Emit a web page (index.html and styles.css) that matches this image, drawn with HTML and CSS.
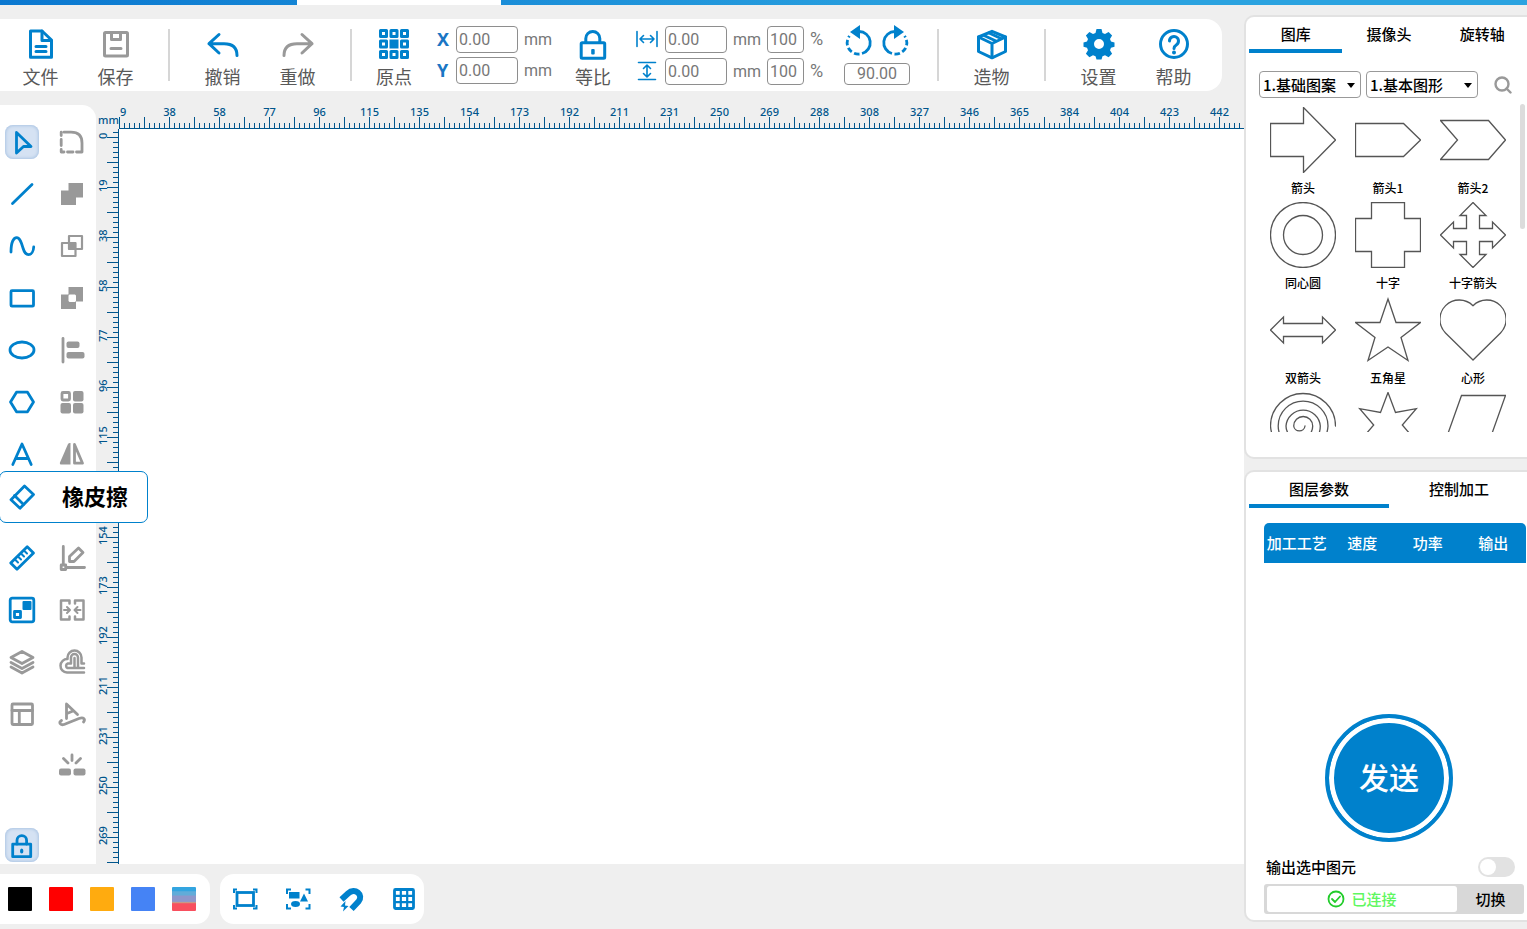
FILE: index.html
```html
<!DOCTYPE html>
<html lang="zh-CN">
  <head>
    <meta charset="UTF-8" />
    <meta name="viewport" content="width=device-width, initial-scale=1.0" />
    <title>激光雕刻</title>
    <link rel="stylesheet" href="styles.css">
  </head>
  <body>
    <div class="titlebar"><div class="titlebar-tab"></div></div>
    <div class="app">
      <main class="editor">
        <header class="toolbar">
          <button class="tool">
            <svg class="icon" viewBox="0 0 34 34"><path d="M6.5 4H18L27.500 13V30.200H6.500Z" /><path d="M18 4V13.500H27" /><path d="M12 19.500H22M12 24.500H22" /></svg>
            文件
          </button>
          <button class="tool muted">
            <svg class="icon" viewBox="0 0 34 34"><rect x="5.500" y="5.500" width="23" height="23.500" rx="1" /><path d="M12.500 6V12.500H21.500V6M12 21.500H22" /></svg>
            保存
          </button>
          <span class="sep"></span>
          <button class="tool">
            <svg class="icon" viewBox="0 0 34 34"><path d="M13 7.500L3 16.700L13 26M3 16.700H18C27 16.700 31 21 31 28.500" /></svg>
            撤销
          </button>
          <button class="tool muted">
            <svg class="icon" viewBox="0 0 34 34"><path d="M21 7.500L31 16.700L21 26M31 16.700H16C7 16.700 3 21 3 28.500" /></svg>
            重做
          </button>
          <span class="sep"></span>
          <button class="tool narrow">
            <svg class="icon" viewBox="0 0 34 34"><path d="M3.500 3.500h6v6h-6zM14 3.500h6v6h-6zM24.500 3.500h6v6h-6zM3.500 14h6v6h-6zM24.500 14h6v6h-6zM3.500 24.500h6v6h-6zM14 24.500h6v6h-6zM24.500 24.500h6v6h-6z" /><path class="solid" d="M12.500 12.500h9v9h-9z" /></svg>
            原点
          </button>
          <div class="fields position">
            <div class="field-row">
              <label class="axis" for="pos_x">X</label>
              <input class="field" type="text" id="pos_x" value="0.00" />
              <span class="unit">mm</span>
            </div>
            <div class="field-row">
              <label class="axis" for="pos_y">Y</label>
              <input class="field" type="text" id="pos_y" value="0.00" />
              <span class="unit">mm</span>
            </div>
          </div>
          <button class="tool narrow">
            <svg class="icon" viewBox="0 0 34 34"><rect x="5.200" y="15.800" width="23.500" height="15.500" rx="1" /><path d="M9.800 15.500V11.500a7 7 0 0 1 14 0V15.500" /><rect class="solid" x="15.200" y="22" width="3.500" height="5.500" rx="1" /></svg>
            等比
          </button>
          <div class="fields size">
            <div class="field-row">
              <label class="dim" for="size_w" aria-label="宽度"><svg class="icon-dim" viewBox="0 0 22 22"><path d="M1 3.500V18.500M21 3.500V18.500M4 11H18M7.500 7.500L4 11L7.500 14.500M14.500 7.500L18 11L14.500 14.500" /></svg></label>
              <input class="field" type="text" id="size_w" value="0.00" />
              <span class="unit">mm</span>
              <input class="field percent" type="text" value="100" aria-label="宽度百分比" />
              <span class="unit percent-sign">%</span>
            </div>
            <div class="field-row">
              <label class="dim" for="size_h" aria-label="高度"><svg class="icon-dim" viewBox="0 0 22 22"><path d="M2.500 2.500H19.500M2.500 19.500H19.500M11 5.500V16.500M7.500 8.500L11 5L14.500 8.500M7.500 13.500L11 17L14.500 13.500" /></svg></label>
              <input class="field" type="text" id="size_h" value="0.00" />
              <span class="unit">mm</span>
              <input class="field percent" type="text" value="100" aria-label="高度百分比" />
              <span class="unit percent-sign">%</span>
            </div>
          </div>
          <div class="rotate">
            <div class="rotate-buttons">
              <button class="plain" aria-label="逆时针旋转"><svg class="icon-rotate" viewBox="0 0 34 34"><path d="M17 6.500A11.200 11.200 0 0 1 20 28.500" /><path stroke-dasharray="5.500 2.500" d="M17.500 29A11.200 11.200 0 0 1 7.500 11" /><path class="solid" d="M18 0V14L8 7Z" /></svg></button>
              <button class="plain" aria-label="顺时针旋转"><svg class="icon-rotate" viewBox="0 0 34 34"><path d="M17 6.500A11.200 11.200 0 0 0 14 28.500" /><path stroke-dasharray="5.500 2.500" d="M16.500 29A11.200 11.200 0 0 0 26.500 11" /><path class="solid" d="M16 0V14L26 7Z" /></svg></button>
            </div>
            <input class="field angle" type="text" value="90.00" aria-label="旋转角度" />
          </div>
          <span class="sep wide"></span>
          <button class="tool">
            <svg class="icon" viewBox="0 0 34 34"><path d="M17 4.300L30.500 10V24.500L17 30.800L3.500 24.500V10Z" /><path d="M3.500 10L17 16.500L30.500 10M17 16.500V30.500M9 8.500L21 14M14 6L26 11.500" /></svg>
            造物
          </button>
          <span class="sep"></span>
          <button class="tool">
            <svg class="icon" viewBox="0 0 34 34"><path class="solid" fill-rule="evenodd" d="M14.500 2h5l1 4 2.500 1 3.600-2.100 3.500 3.500L28 12l1 2.500 3.500 1v4.200l-3.500 1-1 2.500 2.100 3.600-3.500 3.500L23 28.200l-2.500 1-1 3.300h-5l-1-3.300-2.500-1-3.600 2.100-3.500-3.500L6 23.200l-1-2.500-3.500-1v-4.200l3.500-1L6 12 3.900 8.400l3.500-3.500L11 7l2.500-1zM17 12a5 5 0 1 0 0 10a5 5 0 1 0 0-10z" /></svg>
            设置
          </button>
          <button class="tool">
            <svg class="icon" viewBox="0 0 34 34"><circle cx="17" cy="17" r="13.500" /><path d="M12.500 14a4.500 4.500 0 1 1 7 3.700C17.500 19 17 19.500 17 21.500" /><circle class="solid" cx="17" cy="25.500" r="2" /></svg>
            帮助
          </button>
        </header>

        <div class="workspace">
          <nav class="side">
            <div class="side-grid">
              <button class="side-btn active" aria-label="选择"><svg viewBox="0 0 34 34"><path d="M11.500 7.500L26 21.500H18.500L11.500 28Z" /></svg></button>
              <button class="side-btn muted" aria-label="圆角"><svg viewBox="0 0 34 34"><path d="M9 7.200H16C23 7.200 27 11 27 18V27H21.500M12.500 27H18M9 27H6.200V24.500M6.200 20.500V14.500M6.200 10.500V7.200" /></svg></button>
              <button class="side-btn" aria-label="直线"><svg viewBox="0 0 34 34"><path d="M7.500 26.500L27 7.500" /></svg></button>
              <button class="side-btn muted" aria-label="并集"><svg viewBox="0 0 34 34"><path class="solid" d="M13.500 6H28V20.500H21V28H6V13.500H13.500Z" /></svg></button>
              <button class="side-btn" aria-label="曲线"><svg viewBox="0 0 34 34"><path d="M6 23C6 13 8.500 8.700 11.700 8.700C15 8.700 16.500 14 18 19C19.500 24 21 25.700 23.500 25.700C26.500 25.700 28.500 22 28.700 18" /></svg></button>
              <button class="side-btn muted" aria-label="交集"><svg viewBox="0 0 34 34"><path stroke-width="2.200" d="M14 7H27V20H14ZM7 14H20.500V27H7Z" /><path class="solid" d="M13.500 13.500H21V21H13.500Z" /></svg></button>
              <button class="side-btn" aria-label="矩形"><svg viewBox="0 0 34 34"><rect x="6" y="9.700" width="22.500" height="15.500" rx="1" /></svg></button>
              <button class="side-btn muted" aria-label="差集"><svg viewBox="0 0 34 34"><path class="solid" fill-rule="evenodd" d="M13.500 6H28V20.500H21V28H6V13.500H13.500ZM14.500 13.500L13.500 14.500V20L14.500 21H20L21 20V14.500L20 13.500Z" /></svg></button>
              <button class="side-btn" aria-label="椭圆"><svg viewBox="0 0 34 34"><ellipse cx="17" cy="17" rx="12" ry="8" /></svg></button>
              <button class="side-btn muted" aria-label="对齐"><svg viewBox="0 0 34 34"><path d="M8 5.500V29" /><rect class="solid" x="11.500" y="8.500" width="13" height="6.500" rx="2" /><rect class="solid" x="11.500" y="19" width="18" height="6.500" rx="2" /></svg></button>
              <button class="side-btn" aria-label="多边形"><svg viewBox="0 0 34 34"><path d="M11.500 7.200H22.500L28.500 17L22.500 26.800H11.500L5.500 17Z" /></svg></button>
              <button class="side-btn muted" aria-label="阵列"><svg viewBox="0 0 34 34"><rect x="7" y="7.500" width="7.500" height="7.500" rx="1" /><rect class="solid" x="18" y="6" width="10.500" height="10.500" rx="2" /><rect class="solid" x="5.500" y="18" width="10.500" height="10.500" rx="2" /><rect class="solid" x="18" y="18" width="10.500" height="10.500" rx="2" /></svg></button>
              <button class="side-btn" aria-label="文字"><svg viewBox="0 0 34 34"><path d="M7.800 27.500L17 7L26.200 27.500M11 21.500H23" /></svg></button>
              <button class="side-btn muted" aria-label="镜像"><svg viewBox="0 0 34 34"><path class="solid" d="M15.500 6V27.500H5.500Q4.500 27 5 25.500L13 7Q14 5.500 15.500 6Z" /><path d="M19.500 7.500L27.500 26.200H19.500Z" /></svg></button>
              <div class="flyout-slot">
                <button class="flyout">
                  <svg viewBox="0 0 34 34"><path d="M19.500 6L28.500 14.500L15 28.200L6 19.700Z" /><path d="M9.500 15.500L18.500 24.500" /></svg>
                  <span>橡皮擦</span>
                </button>
              </div>
              <button class="side-btn" aria-label="测量"><svg viewBox="0 0 34 34"><path d="M22.200 5.800L28.500 12L12 28.300L5.700 22Z" /><path stroke-width="2" d="M10 18.500L13 21.500M13 15.500L16 18.500M16 12.500L19 15.500M19 9.500L22 12.500" /></svg></button>
              <button class="side-btn muted" aria-label="描点"><svg viewBox="0 0 34 34"><path d="M8.300 5.500V23M12 26.500H29.500" /><rect x="6.200" y="24" width="4.500" height="4.500" /><path d="M14.500 20.500V15.500L23.500 7L28 11.500L19 20.500Z" /></svg></button>
              <button class="side-btn" aria-label="平铺"><svg viewBox="0 0 34 34"><rect x="5.200" y="5.200" width="23.600" height="23.600" rx="2" /><rect class="solid" x="17.500" y="8" width="9" height="9" rx="1" /><rect x="9.500" y="18.500" width="6" height="6" /></svg></button>
              <button class="side-btn muted" aria-label="合并"><svg viewBox="0 0 34 34"><path stroke-width="2.500" d="M14.500 10.500V7.500H6V26.500H14.500V23.500M20 10.500V7.500H28.500V26.500H20V23.500" /><path stroke-width="2" d="M9 17H14.500M12 14L15 17L12 20M25.500 17H20M22.500 14L19.500 17L22.500 20" /></svg></button>
              <button class="side-btn muted" aria-label="图层"><svg viewBox="0 0 34 34"><path d="M17 6.500L28 12.500L17 18.500L6 12.500ZM6 17.500L17 23.500L28 17.500M6 22L17 28L28 22" /></svg></button>
              <button class="side-btn muted" aria-label="偏移"><svg viewBox="0 0 34 34"><path stroke-width="2.500" d="M29 27.500H12A6.700 6.700 0 0 1 12.500 14V12.500A7 7 0 0 1 26.500 12.500V18.500H29M29 23H12.500A2.500 2.500 0 0 1 12.500 18.500H16V12.500A3.500 3.500 0 0 1 23 12.500V22.500M19.500 13V22.500" /></svg></button>
              <button class="side-btn muted" aria-label="布局"><svg viewBox="0 0 34 34"><rect x="7" y="7" width="20.500" height="20.500" rx="1" /><path d="M7 13.500H27.500M14.300 13.500V27.500" /></svg></button>
              <button class="side-btn muted" aria-label="路径文字"><svg viewBox="0 0 34 34"><path d="M11.500 21.500V7L22.500 17.500M12 16.500L18 14" /><path d="M6.500 23.500C3.500 25.500 5 28.500 9 27.500L24 21.500C28.500 20 31 22 28.500 25" /></svg></button>
              <button class="side-btn muted last" aria-label="打散"><svg viewBox="0 0 34 34"><path d="M17 6V11.500M8.500 9.500L13 14M25.500 9.500L21 14" /><rect class="solid" x="4" y="19.500" width="12" height="7" rx="2" /><rect class="solid" x="18.500" y="19.500" width="12" height="7" rx="2" /></svg></button>
            </div>
            <button class="side-btn active lock" aria-label="锁定"><svg viewBox="0 0 34 34"><rect x="7.700" y="16.200" width="18" height="12.500" /><path d="M12 16V12.500a4.800 4.800 0 0 1 9.600 0V16" /><ellipse class="solid" cx="16.700" cy="23" rx="1.700" ry="2.500" /></svg></button>
          </nav>
          <div class="corner">mm</div>
          <div class="ruler-x">
            <span>9</span><span>38</span><span>58</span><span>77</span><span>96</span><span>115</span><span>135</span><span>154</span><span>173</span><span>192</span><span>211</span><span>231</span><span>250</span><span>269</span><span>288</span><span>308</span><span>327</span><span>346</span><span>365</span><span>384</span><span>404</span><span>423</span><span>442</span>
          </div>
          <div class="ruler-y">
            <span>0</span><span>19</span><span>38</span><span>58</span><span>77</span><span>96</span><span>115</span><span></span><span>154</span><span>173</span><span>192</span><span>211</span><span>231</span><span>250</span><span>269</span>
          </div>
          <div class="canvas"></div>
        </div>

        <footer class="bottom">
          <div class="pill colors">
            <button class="swatch black" aria-label="黑色"></button>
            <button class="swatch red" aria-label="红色"></button>
            <button class="swatch orange" aria-label="橙色"></button>
            <button class="swatch blue" aria-label="蓝色"></button>
            <button class="swatch mixed" aria-label="更多颜色"></button>
          </div>
          <div class="pill views">
            <button class="plain" aria-label="画布适应"><svg class="icon-view" viewBox="0 0 26 26"><rect x="5" y="6.500" width="16.500" height="13" /><path stroke-width="2" d="M2 7V3.500H5M21 3.500H24.500V7M2 19V22.500H5M21 22.500H24.500V19" /></svg></button>
            <button class="plain" aria-label="框选图元"><svg class="icon-view" viewBox="0 0 26 26"><path stroke-width="2" d="M2 8V3.500H6M20.500 3.500H24.500V8M2 18V22.500H6M20.500 22.500H24.500V18" /><path class="solid" d="M4 6H14.500V12.500H4ZM19 7.500L23 15.500H15Z" /><ellipse class="solid" cx="10.500" cy="18" rx="4.500" ry="3" /></svg></button>
            <button class="plain" aria-label="吸附"><svg class="icon-view" viewBox="0 0 26 26"><path stroke-width="6" d="M3.500 13.500L10 7.500C17 1 26 9 20.500 15.500L13.500 23" /><path class="solid" d="M7.500 15L2.500 20.500L6 21L5 25.500L10.500 20L7 19.500Z" /></svg></button>
            <button class="plain" aria-label="网格"><svg class="icon-view" viewBox="0 0 26 26"><rect x="3.500" y="3.500" width="19" height="19" rx="1" /><path stroke-width="2.200" d="M9.800 3.500V22.500M16.200 3.500V22.500M3.500 9.800H22.500M3.500 16.200H22.500" /></svg></button>
          </div>
        </footer>
      </main>

      <aside class="panels">
        <section class="panel gallery-panel">
          <div class="tabs">
            <button class="tab selected">图库</button>
            <button class="tab">摄像头</button>
            <button class="tab">旋转轴</button>
          </div>
          <div class="filters">
            <div class="select"><select aria-label="图案分类"><option>1.基础图案</option></select></div>
            <div class="select second"><select aria-label="图形分类"><option>1.基本图形</option></select></div>
            <button class="plain search" aria-label="搜索"><svg viewBox="0 0 18 18"><circle cx="8" cy="8" r="6.500" /><path d="M12.500 12.500L16.500 16.500" /></svg></button>
          </div>
          <div class="gallery">
            <div class="shapes">
              <figure><svg viewBox="0 0 66 66"><path d="M.5 16.500H33.500V.5L65.500 33L33.500 65.500V49.500H.5Z" /></svg><figcaption>箭头</figcaption></figure>
              <figure><svg viewBox="0 0 66 66"><path d="M.5 16.500H48.500L65.500 33L48.500 49.500H.5Z" /></svg><figcaption>箭头1</figcaption></figure>
              <figure><svg viewBox="0 0 66 66"><path d="M.5 13.500H48.500L65.500 33L48.500 52.500H.5L17.500 33Z" /></svg><figcaption>箭头2</figcaption></figure>
              <figure><svg viewBox="0 0 66 66"><circle cx="33" cy="33" r="32.500" /><circle cx="33" cy="33" r="19.500" /></svg><figcaption>同心圆</figcaption></figure>
              <figure><svg viewBox="0 0 66 66"><path d="M16.500 .5H49.500V16.500H65.500V49.500H49.500V65.500H16.500V49.500H.5V16.500H16.500Z" /></svg><figcaption>十字</figcaption></figure>
              <figure><svg viewBox="0 0 66 66"><path d="M33 .5L46 13.500H39.500V26.500H52.500V20L65.500 33L52.500 46V39.500H39.500V52.500H46L33 65.500L20 52.500H26.500V39.500H13.500V46L.5 33L13.500 20V26.500H26.500V13.500H20Z" /></svg><figcaption>十字箭头</figcaption></figure>
              <figure><svg viewBox="0 0 66 66"><path d="M.5 33L13.500 20V26.500H52.500V20L65.500 33L52.500 46V39.500H13.500V46Z" /></svg><figcaption>双箭头</figcaption></figure>
              <figure><svg viewBox="0 0 66 66"><path d="M33 2L41 25.500H65.500L46 40.500L53 63.500L33 50L13 63.500L20 40.500L.5 25.500H25Z" /></svg><figcaption>五角星</figcaption></figure>
              <figure><svg viewBox="0 0 66 66"><path d="M33 63L5.500 36A19.300 19.300 0 0 1 33 8.700A19.300 19.300 0 0 1 60.500 36Z" /></svg><figcaption>心形</figcaption></figure>
              <figure><svg viewBox="0 0 66 66"><path d="M65.500 34A32.500 32.500 0 0 0 .5 34A28.800 28.800 0 0 0 58 34A24.900 24.900 0 0 0 8.200 34A21 21 0 0 0 50.300 34A17.200 17.200 0 0 0 16 34A13.300 13.300 0 0 0 42.700 34A9.500 9.500 0 0 0 23.700 34A5.700 5.700 0 0 0 35 34" /></svg></figure>
              <figure><svg viewBox="0 0 66 66"><path d="M33 .5L40.500 20.500L61.300 16.700L47.300 33L61.300 49.300L40.500 45.500L33 65.500L25.500 45.500L4.700 49.300L18.700 33L4.700 16.700L25.500 20.500Z" /></svg></figure>
              <figure><svg viewBox="0 0 66 66"><path d="M21.500 3.500H65.500L44.500 62.500H.5Z" /></svg></figure>
            </div>
            <span class="thumb"></span>
          </div>
        </section>

        <section class="panel layer-panel">
          <div class="tabs">
            <button class="tab selected">图层参数</button>
            <button class="tab">控制加工</button>
          </div>
          <table class="layers">
            <thead>
              <tr><th>加工工艺</th><th>速度</th><th>功率</th><th>输出</th></tr>
            </thead>
          </table>
          <div class="send-area">
            <button class="send">发送</button>
          </div>
          <div class="option">
            <label for="only_selected">输出选中图元</label>
            <input class="switch" type="checkbox" id="only_selected" />
          </div>
          <div class="status">
            <div class="status-text">
              <svg viewBox="0 0 18 18"><circle cx="9" cy="9" r="7.500" /><path d="M5 9L8 12L13 6.500" /></svg>
              <span>已连接</span>
            </div>
            <button class="switch-device">切换</button>
          </div>
        </section>
      </aside>
    </div>
  </body>
</html>
```
FILE: styles.css
```css
* {
  box-sizing: border-box;
}
body {
  font-family: "Noto Sans CJK SC", sans-serif;
  background-color: #efefef;
  color: #000;
  margin: 0;
  height: 100vh;
  display: flex;
  flex-direction: column;
  overflow: hidden;
}
button {
  font-family: inherit;
  color: inherit;
  background: none;
  border: none;
  padding: 0;
  cursor: pointer;
}
svg {
  display: block;
  fill: none;
  stroke: #0081cc;
  stroke-width: 2.8;
  stroke-linecap: round;
  stroke-linejoin: round;
}
.solid {
  fill: #0081cc;
  stroke: none;
}
.muted svg {
  stroke: #999;
}
.muted .solid {
  fill: #999;
}
.titlebar {
  height: 5px;
  flex: none;
  background: linear-gradient(90deg, #0b78d0, #2ba3e0 65%);
}
.titlebar-tab {
  width: 204px;
  height: 5px;
  margin-left: 297px;
  background-color: #fff;
}
.app {
  flex: 1;
  display: flex;
  min-height: 0;
}
.editor {
  flex: 1;
  min-width: 0;
  display: flex;
  flex-direction: column;
}

/* top toolbar */
.toolbar {
  display: flex;
  align-items: center;
  height: 72px;
  flex: none;
  margin: 14px 22px 14px 0;
  padding-left: 3px;
  background-color: #fff;
  border-radius: 0 16px 16px 0;
}
.tool {
  width: 75px;
  flex: none;
  display: flex;
  flex-direction: column;
  align-items: center;
  gap: 2px;
  padding-top: 6px;
  font-size: 18px;
  line-height: 26px;
  color: #595959;
}
.tool.narrow {
  width: 54px;
}
.icon {
  width: 34px;
  height: 34px;
  stroke-width: 3;
}
.sep {
  width: 2px;
  height: 52px;
  flex: none;
  margin: 0 15px;
  background-color: #d6d6d6;
}
.sep.wide {
  margin-left: 27px;
}
.fields {
  display: flex;
  flex-direction: column;
  gap: 4px;
  flex: none;
  font-family: Roboto, sans-serif;
  font-size: 16px;
  color: #777;
}
.position {
  margin: 0 14px 0 16px;
  width: 115px;
}
.size {
  margin: 0 18px 0 16px;
  width: 190px;
  gap: 5px;
}
.field-row {
  display: flex;
  align-items: center;
}
.field-row > * {
  flex: none;
}
.field {
  width: 62px;
  height: 27px;
  padding: 0 2px;
  border: 1px solid #8e8e8e;
  border-radius: 4px;
  background-color: #fff;
  font-family: Roboto, sans-serif;
  font-size: 16px;
  color: #777;
}
.percent {
  width: 37px;
}
.angle {
  width: 66px;
  height: 22px;
  text-align: center;
}
.axis {
  width: 19px;
  font-family: "Noto Sans", sans-serif;
  font-size: 18px;
  line-height: 27px;
  font-weight: bold;
  color: #1a76c4;
}
.dim {
  width: 29px;
}
.unit {
  margin: 0 6px;
}
.percent-sign {
  font-size: 18px;
  line-height: 20px;
}
.icon-dim {
  width: 22px;
  height: 22px;
  stroke-width: 1.6;
}
.rotate {
  width: 66px;
  flex: none;
}
.rotate-buttons {
  display: flex;
  justify-content: space-around;
  gap: 6px;
  padding-bottom: 1px;
}
.icon-rotate {
  width: 34px;
  height: 34px;
  margin: 0 -2px;
  stroke-linecap: butt;
}

/* drawing area */
.workspace {
  flex: 1;
  min-height: 0;
  display: grid;
  grid-template-columns: 96px 23px 1fr;
  grid-template-rows: 24px 1fr;
}
.side {
  grid-row: 1 / 3;
  display: flex;
  flex-direction: column;
  padding: 20px 5px 2px;
  background-color: #fff;
  border-radius: 0 14px 0 0;
}
.side-grid {
  display: grid;
  grid-template-columns: 34px 34px;
  grid-auto-rows: 34px;
  gap: 18px 16px;
}
.side-btn {
  width: 34px;
  height: 34px;
  border-radius: 8px;
}
.active {
  background-color: #d5e2f3;
  box-shadow: inset 0 0 3px 1px #adc6e4;
}
.last {
  grid-column: 2;
}
.lock {
  margin-top: auto;
}
.flyout-slot {
  grid-column: 1 / 3;
  position: relative;
}
.flyout {
  position: absolute;
  top: -18px;
  left: -6px;
  z-index: 1;
  width: 149px;
  height: 52px;
  display: flex;
  align-items: center;
  gap: 23px;
  padding-left: 5px;
  border: 1px solid #0081cc;
  border-radius: 7px;
  background-color: #fff;
  font-size: 22px;
  font-weight: bold;
  white-space: nowrap;
}
.flyout svg {
  width: 34px;
  height: 34px;
  flex: none;
}
.flyout span {
  padding-bottom: 4px;
}
.corner,
.ruler-x,
.ruler-y {
  font-family: "Noto Sans", sans-serif;
  font-size: 11px;
  line-height: 13px;
  font-weight: 500;
  color: #00558c;
}
.corner {
  padding: 8px 0 0 2px;
}
.ruler-x {
  display: flex;
  overflow: hidden;
  background-image: linear-gradient(#00558c, #00558c),
    linear-gradient(90deg, #00558c 1px, transparent 1px),
    linear-gradient(90deg, #00558c 1px, transparent 1px);
  background-size: 100% 1px, 25px 12px, 5px 6px;
  background-position: left bottom;
  background-repeat: repeat-x;
}
.ruler-x span {
  width: 50px;
  flex: none;
  padding-left: 1px;
  text-align: center;
}
.ruler-x span:first-child {
  width: 25px;
  text-align: left;
}
.ruler-y {
  display: flex;
  flex-direction: column;
  overflow: hidden;
  background-image: linear-gradient(#00558c, #00558c),
    linear-gradient(#00558c 1px, transparent 1px),
    linear-gradient(#00558c 1px, transparent 1px);
  background-size: 1px 100%, 12px 25px, 6px 5px;
  background-position: right 8px;
  background-repeat: repeat-y;
}
.ruler-y span {
  width: 13px;
  height: 50px;
  flex: none;
  writing-mode: vertical-rl;
  transform: rotate(180deg);
  text-align: center;
}
.ruler-y span:first-child {
  height: 14px;
  margin-bottom: 18px;
}
.canvas {
  background-color: #fff;
}

/* bottom bar */
.bottom {
  display: flex;
  gap: 10px;
  flex: none;
  padding: 10px 0 5px;
}
.pill {
  height: 50px;
  display: flex;
  align-items: center;
  background-color: #fff;
  border-radius: 14px;
}
.colors {
  gap: 17px;
  padding: 0 14px 0 8px;
  border-radius: 0 14px 14px 0;
}
.swatch {
  width: 24px;
  height: 24px;
  border-radius: 1px;
}
.black {
  background-color: #000;
}
.red {
  background-color: #f00;
}
.orange {
  background-color: #ffab0f;
}
.blue {
  background-color: #4583f5;
}
.mixed {
  background: linear-gradient(#33a5e0 15%, #61acd9 20% 33%, #8e97cb 38% 60%, #c2a08c 64%, #f84f5e 70%);
}
.views {
  gap: 27px;
  padding: 0 7px 0 12px;
}
.icon-view {
  width: 26px;
  height: 26px;
  stroke-linecap: butt;
  stroke-linejoin: miter;
}

/* right panels */
.panels {
  width: 283px;
  flex: none;
  display: flex;
  flex-direction: column;
  gap: 11px;
  padding: 10px 0 7px;
}
.panel {
  background-color: #fff;
  border: 2px solid #e2e2e2;
  border-right: none;
  border-radius: 10px 0 0 10px;
}
.tabs {
  display: flex;
  margin-right: -2px;
  padding-left: 3px;
}
.tab {
  flex: 1;
  height: 36px;
  border-bottom: 4px solid transparent;
  font-size: 15px;
  font-weight: 500;
}
.selected {
  border-bottom-color: #0081cc;
}
.filters {
  display: flex;
  align-items: center;
  gap: 5px;
  margin-top: 18px;
  padding-left: 13px;
}
.select {
  position: relative;
  width: 102px;
}
.select.second {
  width: 112px;
}
.select::after {
  content: "";
  position: absolute;
  top: 12px;
  right: 6px;
  border: 4px solid transparent;
  border-top: 5px solid #000;
  border-bottom: none;
  pointer-events: none;
}
.select select {
  appearance: none;
  width: 100%;
  height: 27px;
  padding: 0 3px 1px;
  border: 1px solid #999;
  border-radius: 4px;
  background-color: #fff;
  color: #000;
  font-family: inherit;
  font-size: 15px;
  font-weight: 500;
}
.search {
  margin-left: 11px;
}
.search svg {
  width: 18px;
  height: 18px;
  stroke: #999;
  stroke-width: 2.4;
}
.gallery {
  position: relative;
  height: 328px;
  margin: 6px 0 25px;
  overflow: hidden;
}
.shapes {
  display: grid;
  grid-template-columns: repeat(3, 85px);
  padding-left: 14px;
}
.shapes figure {
  height: 95px;
  margin: 0;
  padding-top: 3px;
}
.shapes svg {
  width: 66px;
  height: 66px;
  margin: 0 auto;
  stroke: #555;
  stroke-width: 1.3;
  stroke-linejoin: miter;
}
.shapes figcaption {
  margin-top: 5px;
  padding-left: 1px;
  font-size: 12px;
  line-height: 20px;
  font-weight: 500;
  text-align: center;
}
.thumb {
  position: absolute;
  top: 0;
  right: 2px;
  width: 5px;
  height: 125px;
  border-radius: 3px;
  background-color: #dcdcdc;
}
.layer-panel {
  flex: 1;
  display: flex;
  flex-direction: column;
  padding-bottom: 6px;
}
.layers {
  width: calc(100% - 19px);
  table-layout: fixed;
  border-collapse: collapse;
  margin: 15px 1px 0 18px;
  border-radius: 5px 5px 0 0;
  overflow: hidden;
  background-color: #0081cc;
  color: #fff;
}
.layers th {
  height: 40px;
  padding: 0 0 2px;
  font-size: 15px;
  font-weight: 500;
  white-space: nowrap;
}
.send-area {
  display: flex;
  justify-content: center;
  margin-top: auto;
  padding-left: 5px;
}
.send {
  width: 128px;
  height: 128px;
  padding-bottom: 4px;
  border: 4px solid #0081cc;
  border-radius: 50%;
  background-color: #0081cc;
  box-shadow: inset 0 0 0 5px #fff;
  color: #fff;
  font-size: 30px;
  font-weight: 500;
}
.option {
  display: flex;
  align-items: center;
  justify-content: space-between;
  margin-top: 15px;
  padding: 0 12px 0 20px;
  font-size: 15px;
  line-height: 20px;
  font-weight: 500;
}
.switch {
  appearance: none;
  width: 37px;
  height: 20px;
  margin: 0;
  padding: 2px;
  border-radius: 10px;
  background-color: #e2e2e2;
}
.switch::before {
  content: "";
  display: block;
  width: 16px;
  height: 16px;
  border-radius: 50%;
  background-color: #fff;
}
.switch:checked {
  background-color: #0081cc;
}
.switch:checked::before {
  margin-left: auto;
}
.status {
  display: flex;
  height: 30px;
  margin: 7px 3px 0 18px;
  padding: 2px 0 2px 3px;
  border-radius: 3px;
  background-color: #d8d8d8;
}
.status-text {
  flex: 1;
  display: flex;
  align-items: center;
  justify-content: center;
  gap: 6px;
  border-radius: 3px;
  background-color: #fff;
  color: #5ff75f;
  font-size: 15px;
  font-weight: 500;
}
.status-text span {
  padding-bottom: 2px;
}
.status-text svg {
  width: 18px;
  height: 18px;
  stroke: #22cc2b;
  stroke-width: 1.8;
}
.switch-device {
  width: 67px;
  padding-bottom: 2px;
  font-size: 15px;
  font-weight: 500;
}
```
